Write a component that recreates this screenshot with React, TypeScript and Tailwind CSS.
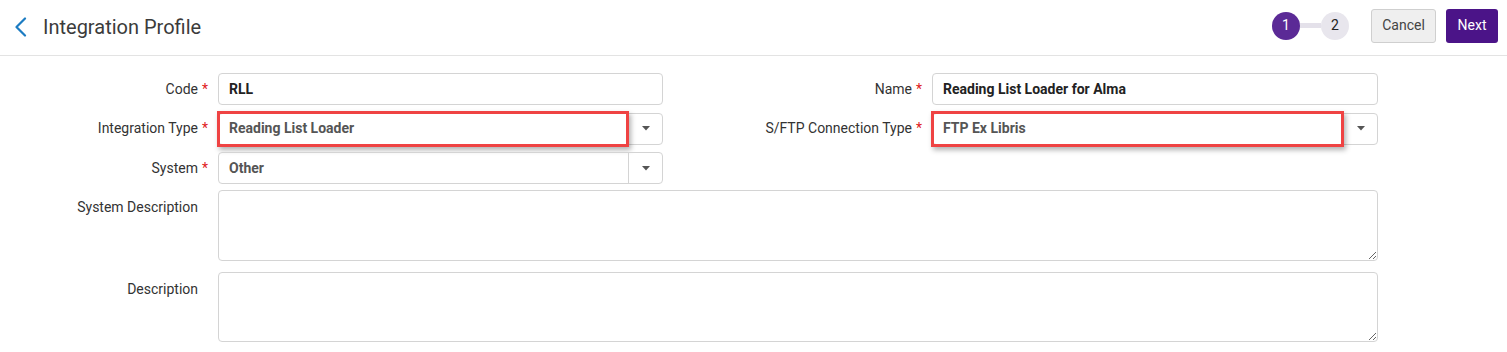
export default function App() {
  return (
    <div className="w-[1507px] h-[352px] bg-white font-['Roboto',sans-serif] text-[#333] overflow-hidden">
      {/* header */}
      <div className="h-[56px] border-b border-[#e3e3e3] flex items-center">
        <svg className="ml-[13px] -mt-[2px] w-[14px] h-[20px]" viewBox="0 0 14 20" fill="none">
          <path d="M12 1.5 L3.5 10 L12 18.5" stroke="#1c7cc2" strokeWidth="2.2" strokeLinecap="round" strokeLinejoin="round" />
        </svg>
        <div className="ml-[16px] -mt-[2px] text-[20px] text-[#3b3b3b]">Integration Profile</div>
        <div className="ml-auto flex items-center -mt-[4px]">
          <div className="flex items-center">
            <div className="w-[28px] h-[28px] rounded-full bg-[#5b2a96] text-white text-[14px] flex items-center justify-center">1</div>
            <div className="w-[21px] h-[5px] bg-[#e4e1ea]" />
            <div className="w-[28px] h-[28px] rounded-full bg-[#e8e6ed] text-[#222] text-[14px] flex items-center justify-center">2</div>
          </div>
          <button className="ml-[22px] h-[34px] w-[65px] rounded-[3px] border border-[#cfcfcf] bg-[#efefef] text-[14px] text-[#444]">Cancel</button>
          <button className="ml-[10px] mr-[9px] h-[34px] w-[52px] rounded-[3px] bg-[#4b1488] text-[14px] text-white">Next</button>
        </div>
      </div>

      {/* form */}
      <div className="pt-[17px] flex flex-col">
        <div className="flex">
          <div className="flex flex-col gap-[7.5px]">
            <Row label="Code" required>
              <TextBox value="RLL" />
            </Row>
            <Row label="Integration Type" required>
              <Select value="Reading List Loader" highlight />
            </Row>
            <Row label="System" required>
              <Select value="Other" />
            </Row>
          </div>
          <div className="flex flex-col gap-[7.5px]">
            <Row label="Name" required wide>
              <TextBox value="Reading List Loader for Alma" />
            </Row>
            <Row label="S/FTP Connection Type" required wide>
              <Select value="FTP Ex Libris" highlight />
            </Row>
          </div>
        </div>
        <TextArea label="System Description" className="mt-[6px] h-[71px]" />
        <TextArea label="Description" className="mt-[11px] h-[70px]" />
      </div>
    </div>
  );
}

function Row({ label, required, wide, children }: { label: string; required?: boolean; wide?: boolean; children: React.ReactNode }) {
  return (
    <div className="flex items-center h-[32px]">
      <div className={`${wide ? "w-[249px]" : "w-[198px]"} text-right text-[14px] text-[#333]`}>{label}</div>
      <div className="w-[20px] pl-[4px] text-[14px] text-[#e0201b]">{required ? "*" : ""}</div>
      <div className={wide ? "w-[446px]" : "w-[445px]"}>{children}</div>
    </div>
  );
}

function TextBox({ value }: { value: string }) {
  return (
    <div className="h-[32px] border border-[#d4d4d4] rounded-[4px] flex items-center px-[10px] text-[14px] font-bold text-[#222]">
      {value}
    </div>
  );
}

function Select({ value, highlight }: { value: string; highlight?: boolean }) {
  return (
    <div className="relative h-[32px] border border-[#d4d4d4] rounded-[4px] flex">
      <div className="flex-1 flex items-center px-[10px] text-[14px] font-bold text-[#555]">{value}</div>
      <div className="w-[34px] border-l border-[#d4d4d4] flex items-center justify-center">
        <svg width="8" height="5" viewBox="0 0 8 5">
          <path d="M0 0 H8 L4 4.5 Z" fill="#555" />
        </svg>
      </div>
      {highlight && (
        <div className="absolute left-[-2px] top-[-3px] right-[33px] bottom-[-3px] border-[3px] border-[#ef4343] shadow-[2px_3px_5px_rgba(0,0,0,0.3)]" />
      )}
    </div>
  );
}

function TextArea({ label, className }: { label: string; className?: string }) {
  return (
    <div className={`flex ${className ?? ""}`}>
      <div className="w-[198px] pt-[7px] text-right text-[14px] text-[#333]">{label}</div>
      <textarea className="ml-[20px] w-[1160px] h-full border border-[#d4d4d4] rounded-[4px] outline-none resize-y" />
    </div>
  );
}
